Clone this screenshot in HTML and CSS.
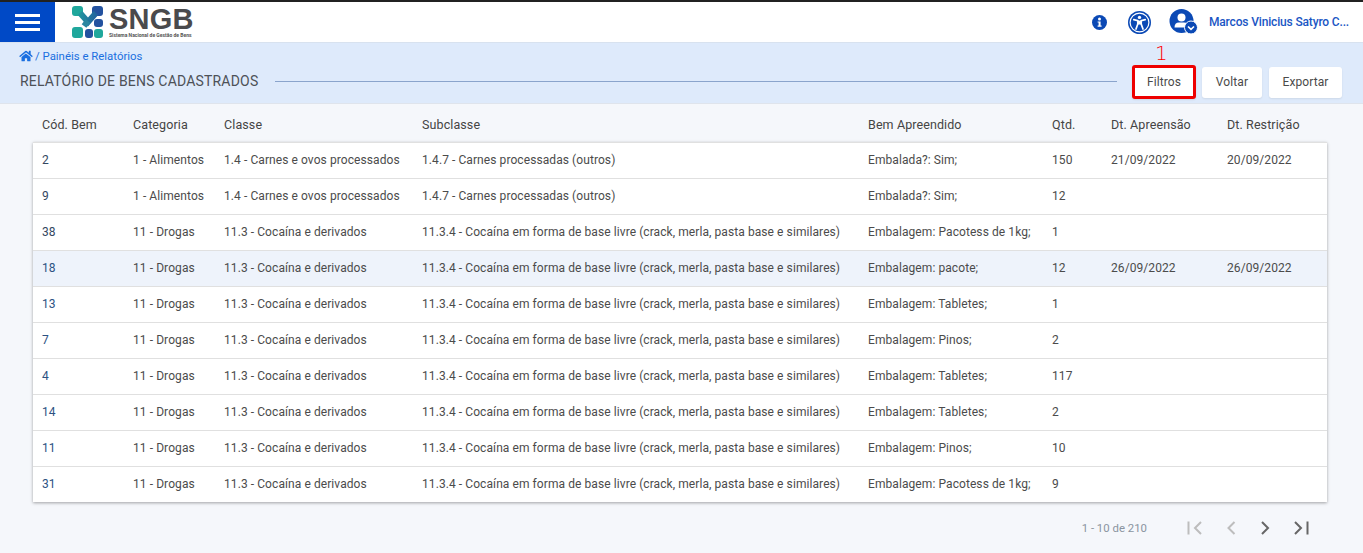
FILE: index.html
```html
<!DOCTYPE html>
<html lang="en">
<head>
  <meta charset="UTF-8">
  <meta name="viewport" content="width=device-width, initial-scale=1.0">
  <title>SNGB - Relatório de Bens Cadastrados</title>
  <link rel="stylesheet" href="styles.css">
</head>
<body>
  <header class="topbar">
    <button class="menu-btn" aria-label="Menu">
      <span></span><span></span><span></span>
    </button>
    <div class="logo">
      <svg class="logo-mark" width="32" height="32" viewBox="0 0 32 32">
        <defs>
          <linearGradient id="lg" gradientUnits="userSpaceOnUse" x1="2" y1="4" x2="30" y2="10">
            <stop offset="0" stop-color="#1fa79c"/>
            <stop offset="1" stop-color="#23529f"/>
          </linearGradient>
        </defs>
        <rect x="0" y="0" width="11" height="10" rx="3" fill="#1fa79c"/>
        <rect x="20" y="0" width="11" height="10" rx="3" fill="#23529f"/>
        <path d="M8 7l8 9 8-9" fill="none" stroke="url(#lg)" stroke-width="6"/>
        <path d="M16 15l-4 5" fill="none" stroke="#2a86a0" stroke-width="6"/>
        <rect x="22" y="13" width="9" height="8" rx="3" fill="#23529f"/>
        <rect x="0" y="21" width="11" height="11" rx="3" fill="#1fa79c"/>
        <rect x="13" y="23" width="8" height="9" rx="3" fill="#23529f"/>
        <rect x="22" y="23" width="9" height="9" rx="3" fill="#1fa79c"/>
      </svg>
      <div class="logo-text">
        <span class="logo-name">SNGB</span>
        <span class="logo-sub">Sistema Nacional de Gestão de Bens</span>
      </div>
    </div>
    <div class="top-right">
      <svg class="ico-info" width="15" height="15" viewBox="0 0 15 15">
        <circle cx="7.5" cy="7.5" r="7.5" fill="#0b49b5"/>
        <circle cx="7.5" cy="4" r="1.5" fill="#fff"/>
        <path d="M5.6 6.4h3v4.2h1v1.2H5.600v-1.200h1V7.600h-1z" fill="#fff"/>
      </svg>
      <svg class="ico-access" width="23" height="23" viewBox="0 0 23 23">
        <circle cx="11.5" cy="11.5" r="11.5" fill="#0b49b5"/>
        <circle cx="11.5" cy="11.5" r="9.4" fill="none" stroke="#fff" stroke-width="1.2"/>
        <circle cx="11.5" cy="6.4" r="1.7" fill="#fff"/>
        <path d="M5.800 8.600l4 1v3.400l-1.800 5M17.200 8.600l-4 1v3.400l1.800 5" fill="none" stroke="#fff" stroke-width="1.700" stroke-linecap="round"/>
        <path d="M9.800 9.600h3.400V13.500H9.800z" fill="#fff"/>
      </svg>
      <svg class="ico-user" width="29" height="26" viewBox="0 0 29 26">
        <circle cx="12.500" cy="12" r="12" fill="#0b49b5"/>
        <circle cx="12.500" cy="8.500" r="4" fill="#fff"/>
        <path d="M5.500 18.500q0-5 4.500-5h5q4.500 0 4.500 5z" fill="#fff"/>
        <circle cx="22" cy="18.500" r="6.500" fill="#0b49b5" stroke="#fff" stroke-width="1"/>
        <path d="M19 17.500l3 2.800 3-2.800" fill="none" stroke="#fff" stroke-width="1.600"/>
      </svg>
      <span class="user-name">Marcos Vinicius Satyro C...</span>
    </div>
  </header>

  <section class="subbar">
    <nav class="crumbs">
      <svg width="14" height="12" viewBox="0 0 576 512"><path fill="#1a6fe0" d="M280 148 96 300v164q0 16 16 16l112-1q16 0 16-16v-96q0-16 16-16h64q16 0 16 16v96q0 16 16 16l112 1q16 0 16-16V300zM572 251l-84-69V44q0-12-12-12h-56q-12 0-12 12v72l-89-74q-31-26-62 0L4 251q-9 8-2 17l26 31q8 9 17 2L280 107a12 12 0 0 1 16 0l235 194q9 7 17-2l26-31q6-9-2-17z"/></svg>
      <span class="crumb-link">/ Painéis e Relatórios</span>
    </nav>
    <div class="title-row">
      <h1>RELATÓRIO DE BENS CADASTRADOS</h1>
      <div class="rule"></div>
      <div class="actions">
        <div class="filter-wrap">
          <span class="callout">1</span>
          <button class="btn btn-marked">Filtros</button>
        </div>
        <button class="btn">Voltar</button>
        <button class="btn btn-wide">Exportar</button>
      </div>
    </div>
  </section>

  <main class="content">
    <table class="grid">
      <colgroup>
        <col class="c1"><col class="c2"><col class="c3"><col class="c4">
        <col class="c5"><col class="c6"><col class="c7"><col class="c8">
      </colgroup>
      <thead>
        <tr>
          <th>Cód. Bem</th><th>Categoria</th><th>Classe</th><th>Subclasse</th>
          <th>Bem Apreendido</th><th>Qtd.</th><th>Dt. Apreensão</th><th>Dt. Restrição</th>
        </tr>
      </thead>
      <tbody>
        <tr><td>2</td><td>1 - Alimentos</td><td>1.4 - Carnes e ovos processados</td><td>1.4.7 - Carnes processadas (outros)</td><td>Embalada?: Sim;</td><td>150</td><td>21/09/2022</td><td>20/09/2022</td></tr>
        <tr><td>9</td><td>1 - Alimentos</td><td>1.4 - Carnes e ovos processados</td><td>1.4.7 - Carnes processadas (outros)</td><td>Embalada?: Sim;</td><td>12</td><td></td><td></td></tr>
        <tr><td>38</td><td>11 - Drogas</td><td>11.3 - Cocaína e derivados</td><td>11.3.4 - Cocaína em forma de base livre (crack, merla, pasta base e similares)</td><td>Embalagem: Pacotess de 1kg;</td><td>1</td><td></td><td></td></tr>
        <tr class="hover"><td>18</td><td>11 - Drogas</td><td>11.3 - Cocaína e derivados</td><td>11.3.4 - Cocaína em forma de base livre (crack, merla, pasta base e similares)</td><td>Embalagem: pacote;</td><td>12</td><td>26/09/2022</td><td>26/09/2022</td></tr>
        <tr><td>13</td><td>11 - Drogas</td><td>11.3 - Cocaína e derivados</td><td>11.3.4 - Cocaína em forma de base livre (crack, merla, pasta base e similares)</td><td>Embalagem: Tabletes;</td><td>1</td><td></td><td></td></tr>
        <tr><td>7</td><td>11 - Drogas</td><td>11.3 - Cocaína e derivados</td><td>11.3.4 - Cocaína em forma de base livre (crack, merla, pasta base e similares)</td><td>Embalagem: Pinos;</td><td>2</td><td></td><td></td></tr>
        <tr><td>4</td><td>11 - Drogas</td><td>11.3 - Cocaína e derivados</td><td>11.3.4 - Cocaína em forma de base livre (crack, merla, pasta base e similares)</td><td>Embalagem: Tabletes;</td><td>117</td><td></td><td></td></tr>
        <tr><td>14</td><td>11 - Drogas</td><td>11.3 - Cocaína e derivados</td><td>11.3.4 - Cocaína em forma de base livre (crack, merla, pasta base e similares)</td><td>Embalagem: Tabletes;</td><td>2</td><td></td><td></td></tr>
        <tr><td>11</td><td>11 - Drogas</td><td>11.3 - Cocaína e derivados</td><td>11.3.4 - Cocaína em forma de base livre (crack, merla, pasta base e similares)</td><td>Embalagem: Pinos;</td><td>10</td><td></td><td></td></tr>
        <tr><td>31</td><td>11 - Drogas</td><td>11.3 - Cocaína e derivados</td><td>11.3.4 - Cocaína em forma de base livre (crack, merla, pasta base e similares)</td><td>Embalagem: Pacotess de 1kg;</td><td>9</td><td></td><td></td></tr>
      </tbody>
    </table>

    <div class="pager">
      <span class="range">1 - 10 de 210</span>
      <svg class="pg" width="15" height="14" viewBox="0 0 15 14"><path d="M1.500 .5v13M14 1 8 7l6 6" fill="none" stroke="#bdbdbd" stroke-width="2"/></svg>
      <svg class="pg" width="10" height="14" viewBox="0 0 10 14"><path d="M8.500 1 2.500 7l6 6" fill="none" stroke="#bdbdbd" stroke-width="2"/></svg>
      <svg class="pg" width="10" height="14" viewBox="0 0 10 14"><path d="M2 1l6 6-6 6" fill="none" stroke="#666" stroke-width="2"/></svg>
      <svg class="pg" width="15" height="14" viewBox="0 0 15 14"><path d="M13.500 .5v13M1 1l6 6-6 6" fill="none" stroke="#666" stroke-width="2"/></svg>
    </div>
  </main>
</body>
</html>
```

FILE: styles.css
```css
body, html {
  height: 100%;
  margin: 0;
  padding: 0;
  overflow: hidden;
  background: #f5f7fb;
  font-family: Roboto, "Liberation Sans", sans-serif;
}

/* top bar */
.topbar {
  height: 40px;
  border-top: 2px solid #212121;
  background: #fff;
  display: flex;
  align-items: center;
}
.menu-btn {
  width: 55px;
  height: 40px;
  flex: none;
  border: none;
  padding: 0 15px;
  background: #0049c6;
  display: flex;
  flex-direction: column;
  justify-content: center;
  gap: 4px;
}
.menu-btn span {
  display: block;
  height: 3px;
  background: #fff;
}
.logo {
  margin-left: 17px;
  display: flex;
  align-items: center;
  gap: 5px;
}
.logo-text {
  display: flex;
  flex-direction: column;
  height: 32px;
}
.logo-name {
  font-family: "Liberation Sans", sans-serif;
  font-weight: 700;
  font-size: 29px;
  line-height: 26px;
  letter-spacing: 0.2px;
  color: #4a4a4c;
}
.logo-sub {
  font-size: 5px;
  line-height: 6px;
  font-weight: 700;
  color: #555;
  white-space: nowrap;
}
.top-right {
  margin-left: auto;
  padding-right: 14px;
  display: flex;
  align-items: center;
}
.ico-info { margin-right: 21px; }
.ico-access { margin-right: 18px; }
.ico-user { margin-right: 11px; }
.user-name {
  font-size: 12px;
  color: #1a56c4;
  white-space: nowrap;
  font-weight: 500;
  letter-spacing: -0.16px;
}

/* title band */
.subbar {
  height: 60px;
  background: #deeafb;
  border-top: 1px solid #d8e2ef;
  border-bottom: 1px solid #dfe4ec;
  padding: 0 21px 0 20px;
}
.crumbs {
  height: 26px;
  display: flex;
  align-items: center;
  gap: 2px;
  font-size: 11.400px;
  margin-left: -1px;
}
.crumb-link { color: #1a6fe0; }
.title-row {
  display: flex;
  align-items: center;
  height: 26px;
}
.title-row h1 {
  margin: 0 0 2px;
  font-size: 14px;
  font-weight: 400;
  color: #4d5157;
  letter-spacing: 0.19px;
  white-space: nowrap;
}
.rule {
  flex: 1;
  height: 1px;
  margin: 0 15px 2px 17px;
  background: #8aa4cc;
}
.actions {
  display: flex;
  align-items: center;
  gap: 6px;
}
.filter-wrap { position: relative; }
.callout {
  position: absolute;
  top: -24px;
  left: 23px;
  font-family: "DejaVu Sans", sans-serif;
  font-weight: 200;
  font-size: 20px;
  color: #ff0000;
}
.btn {
  height: 31px;
  width: 60px;
  border: none;
  border-radius: 3px;
  background: #fff;
  box-sizing: border-box;
  font-family: inherit;
  font-size: 12px;
  font-weight: 400;
  letter-spacing: 0.1px;
  color: #4a4a4a;
  padding: 0;
  box-shadow: 0 1px 2px rgba(0,0,0,0.08);
}
.btn-wide { width: 73px; margin-left: 1px; }
.btn-marked {
  width: 64px;
  height: 34px;
  border: 3px solid #ee0000;
  display: block;
}

/* table */
.content {
  padding: 2px 36px 0 33px;
}
.grid {
  width: 1294px;
  border-collapse: collapse;
  table-layout: fixed;
  font-size: 12px;
  letter-spacing: 0.08px;
  color: #4b4b4b;
}
.c1, .c2 { width: 91px; }
.c3 { width: 198px; }
.c4 { width: 446px; }
.c5 { width: 184px; }
.c6 { width: 59px; }
.c7 { width: 116px; }
.c8 { width: 109px; }
.grid th {
  height: 36px;
  padding: 2px 0 0 9px;
  box-sizing: border-box;
  text-align: left;
  font-weight: 400;
  font-size: 12.500px;
  letter-spacing: 0.1px;
  color: #444;
}
.grid tbody {
  background: #fff;
  box-shadow: 0 1px 3px rgba(0,0,0,0.35);
}
.grid td {
  height: 36px;
  padding: 0 0 0 9px;
  box-sizing: border-box;
  border-top: 1px solid #e0e0e0;
  white-space: nowrap;
  overflow: hidden;
}
.grid tr.hover { background: #eef3fb; }
.grid td:first-child { color: #33475f; }
.grid tr:nth-child(n+4) td:first-child { color: #2c5282; }

/* pagination */
.pager {
  display: flex;
  align-items: center;
  justify-content: flex-end;
  height: 52px;
  padding-right: 18px;
}
.range {
  font-size: 11.400px;
  color: #8a94a0;
  margin-right: 40px;
}
.pg { margin-left: 24px; }
.range + .pg { margin-left: 0; }
```
